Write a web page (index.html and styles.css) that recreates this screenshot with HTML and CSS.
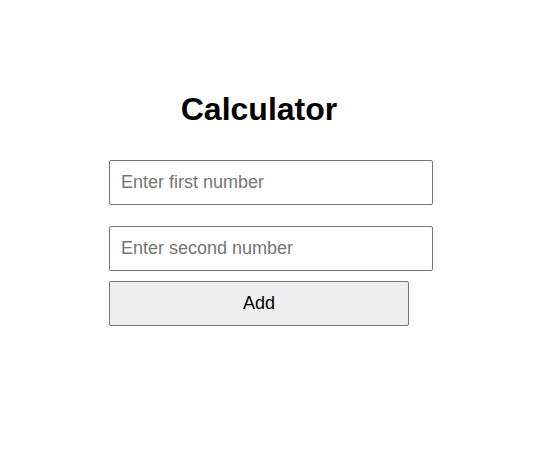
FILE: index.html
```html
<!DOCTYPE html>
<html lang="en">
<head>
    <meta charset="UTF-8">
    <meta name="viewport" content="width=device-width, initial-scale=1.0">
    <title>Calculator</title>
    <link rel="stylesheet" href="styles.css">
</head>
<body>

    <!-- Calculator form -->
    <div class="calculator">
        <h1>Calculator</h1>
        <input type="number" id="num1" class="field" placeholder="Enter first number">
        <input type="number" id="num2" class="field field-second" placeholder="Enter second number">
        <button class="button" onclick="addNumbers()">Add</button>
        <p id="result" class="result"></p>
    </div>

    <script>
        function addNumbers() {
            var a = parseFloat(document.getElementById('num1').value) || 0;
            var b = parseFloat(document.getElementById('num2').value) || 0;
            document.getElementById('result').textContent = 'Result: ' + (a + b);
        }
    </script>

</body>
</html>
```

FILE: styles.css
```css
/* Global Styles */
body {
    margin: 0;
    font-family: "Liberation Sans", Arial, sans-serif;
    background-color: #ffffff;
}

.calculator {
    display: flex;
    flex-direction: column;
    align-items: flex-start;
    width: 300px;
    margin-left: 109px;
    padding-top: 91px;
}

h1 {
    align-self: stretch;
    text-align: center;
    font-size: 32px;
    font-weight: bold;
    color: #000;
    margin: 0 0 32px;
}

/* Inputs */
.field {
    width: 300px;
    padding: 11px;
    font-family: inherit;
    font-size: 18px;
    border: 1px solid #767676;
    border-radius: 2px;
    color: #000;
    background: #fff;
    margin: 0;
}

.field::placeholder {
    color: #757575;
}

.field-second {
    margin-top: 21px;
}

/* Button */
.button {
    width: 300px;
    height: 45px;
    margin-top: 10px;
    font-family: inherit;
    font-size: 18px;
    color: #000;
    background-color: #efefef;
    border: 1px solid #767676;
    border-radius: 2px;
    cursor: pointer;
}

.result {
    margin: 10px 0 0;
    font-size: 18px;
}
```
